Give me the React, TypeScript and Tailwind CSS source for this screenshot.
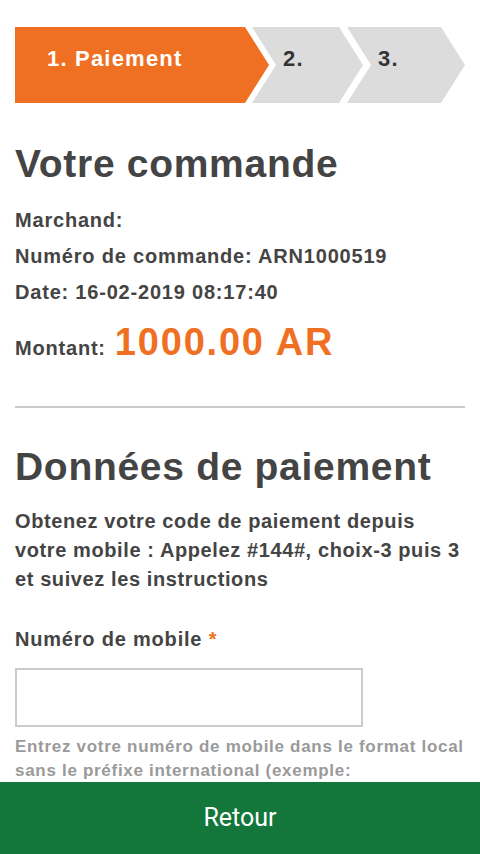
const steps = [
  { id: 1, label: '1. Paiement', active: true },
  { id: 2, label: '2.', active: false },
  { id: 3, label: '3.', active: false },
];

const orderLines = [
  'Marchand:',
  'Numéro de commande: ARN1000519',
  'Date: 16-02-2019 08:17:40',
];

function Stepper() {
  return (
    <div className="flex h-[76px] mx-[15px] mt-[27px]">
      {steps.map((step, i) => (
        <div
          key={step.id}
          className={
            i === 0
              ? 'flex items-center w-[254px] pl-8 pb-[14px] bg-[#f07023] text-white [clip-path:polygon(0_0,calc(100%-24px)_0,100%_50%,calc(100%-24px)_100%,0_100%)]'
              : i === 1
                ? 'flex items-center w-[111px] -ml-[17px] pl-[31px] pb-[14px] bg-[#dcdcdc] text-[#333] [clip-path:polygon(0_0,calc(100%-24px)_0,100%_50%,calc(100%-24px)_100%,0_100%,24px_50%)]'
                : 'flex items-center w-[118px] -ml-[16px] pl-[31px] pb-[14px] bg-[#dcdcdc] text-[#333] [clip-path:polygon(0_0,calc(100%-24px)_0,100%_50%,calc(100%-24px)_100%,0_100%,24px_50%)]'
          }
        >
          <span className="text-[22px] tracking-[1.2px] font-bold">{step.label}</span>
        </div>
      ))}
    </div>
  );
}

export default function App() {
  return (
    <div className="min-h-screen bg-white text-[#444] font-['Liberation_Sans',Arial,sans-serif] pb-[90px]">
      <Stepper />

      <div className="px-[15px]">
        <h1 className="mt-[39px] text-[39px] leading-[44px] tracking-[0.7px] font-bold">Votre commande</h1>

        <div className="mt-[16px] flex flex-col">
          {orderLines.map((line) => (
            <p key={line} className="text-[20px] leading-[36px] tracking-[0.8px] font-bold">
              {line}
            </p>
          ))}
          <p className="mt-[9px] flex items-baseline gap-[9px] text-[20px] tracking-[0.8px] font-bold">
            Montant:
            <span className="text-[38px] leading-[46px] tracking-[1.8px] text-[#f07023]">1000.00 AR</span>
          </p>
        </div>

        <div className="mt-[41px] h-[2px] bg-[#cccccc]" />

        <h2 className="mt-[37px] text-[39px] leading-[44px] tracking-[0.7px] font-bold">Données de paiement</h2>

        <p className="mt-[18px] text-[20px] leading-[29px] tracking-[0.6px] font-bold">
          Obtenez votre code de paiement depuis
          <br />
          votre mobile : Appelez #144#, choix-3 puis 3
          <br />
          et suivez les instructions
        </p>

        <label className="mt-[31px] block text-[20px] leading-[29px] tracking-[0.8px] font-bold">
          Numéro de mobile <span className="text-[#f07023]">*</span>
        </label>

        <input
          type="text"
          className="mt-[14px] block w-[348px] h-[59px] border-2 border-[#cccccc] bg-white outline-none px-3 text-[18px]"
        />

        <p className="mt-[8px] text-[17px] leading-[24px] tracking-[0.7px] font-bold text-[#9a9a9a]">
          Entrez votre numéro de mobile dans le format local
          <br />
          sans le préfixe international (exemple:
          <br />
          0341234567)
        </p>
      </div>

      <button className="fixed bottom-0 left-0 right-0 h-[72px] bg-[#13763b] text-white text-[25px] font-['Roboto',sans-serif]">
        Retour
      </button>
    </div>
  );
}
